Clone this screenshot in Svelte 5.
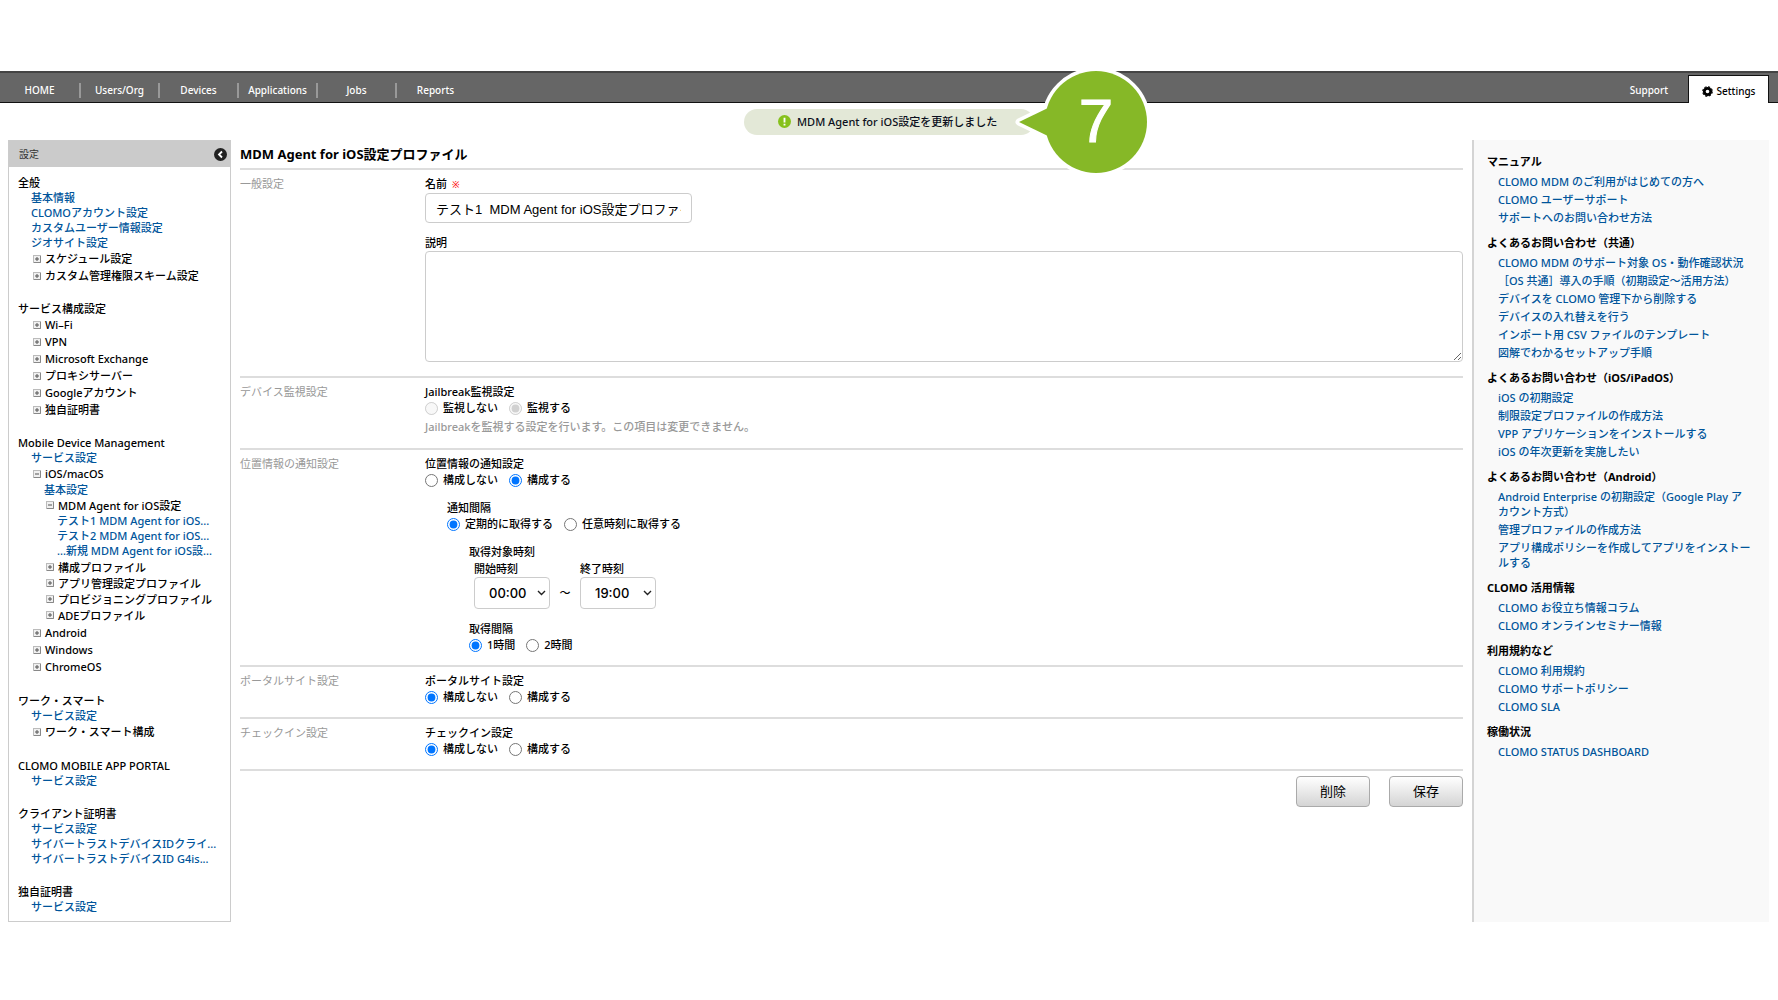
<script>
  const nav = ['HOME', 'Users/Org', 'Devices', 'Applications', 'Jobs', 'Reports'];

  const link = (text) => ({ kind: 'link', text });
  const node = (text, children) => ({ kind: 'node', text, children });

  const tree = [
    {
      title: '全般',
      items: [
        link('基本情報'),
        link('CLOMOアカウント設定'),
        link('カスタムユーザー情報設定'),
        link('ジオサイト設定'),
        node('スケジュール設定'),
        node('カスタム管理権限スキーム設定'),
      ],
    },
    {
      title: 'サービス構成設定',
      items: [
        node('Wi–Fi'),
        node('VPN'),
        node('Microsoft Exchange'),
        node('プロキシサーバー'),
        node('Googleアカウント'),
        node('独自証明書'),
      ],
    },
    {
      title: 'Mobile Device Management',
      items: [
        link('サービス設定'),
        node('iOS/macOS', [
          link('基本設定'),
          node('MDM Agent for iOS設定', [
            link('テスト1 MDM Agent for iOS...'),
            link('テスト2 MDM Agent for iOS...'),
            link('...新規 MDM Agent for iOS設...'),
          ]),
          node('構成プロファイル'),
          node('アプリ管理設定プロファイル'),
          node('プロビジョニングプロファイル'),
          node('ADEプロファイル'),
        ]),
        node('Android'),
        node('Windows'),
        node('ChromeOS'),
      ],
    },
    { title: 'ワーク・スマート', items: [link('サービス設定'), node('ワーク・スマート構成')] },
    { title: 'CLOMO MOBILE APP PORTAL', items: [link('サービス設定')] },
    {
      title: 'クライアント証明書',
      items: [
        link('サービス設定'),
        link('サイバートラストデバイスIDクライ...'),
        link('サイバートラストデバイスID G4is...'),
      ],
    },
    { title: '独自証明書', items: [link('サービス設定')] },
  ];

  const help = [
    {
      title: 'マニュアル',
      links: ['CLOMO MDM のご利用がはじめての方へ', 'CLOMO ユーザーサポート', 'サポートへのお問い合わせ方法'],
    },
    {
      title: 'よくあるお問い合わせ（共通）',
      links: [
        'CLOMO MDM のサポート対象 OS・動作確認状況',
        '［OS 共通］導入の手順（初期設定〜活用方法）',
        'デバイスを CLOMO 管理下から削除する',
        'デバイスの入れ替えを行う',
        'インポート用 CSV ファイルのテンプレート',
        '図解でわかるセットアップ手順',
      ],
    },
    {
      title: 'よくあるお問い合わせ（iOS/iPadOS）',
      links: [
        'iOS の初期設定',
        '制限設定プロファイルの作成方法',
        'VPP アプリケーションをインストールする',
        'iOS の年次更新を実施したい',
      ],
    },
    {
      title: 'よくあるお問い合わせ（Android）',
      links: [
        'Android Enterprise の初期設定（Google Play アカウント方式）',
        '管理プロファイルの作成方法',
        'アプリ構成ポリシーを作成してアプリをインストールする',
      ],
    },
    { title: 'CLOMO 活用情報', links: ['CLOMO お役立ち情報コラム', 'CLOMO オンラインセミナー情報'] },
    { title: '利用規約など', links: ['CLOMO 利用規約', 'CLOMO サポートポリシー', 'CLOMO SLA'] },
    { title: '稼働状況', links: ['CLOMO STATUS DASHBOARD'] },
  ];

  const hours = Array.from({ length: 24 }, (_, h) => `${String(h).padStart(2, '0')}:00`);

  let name = $state('テスト1  MDM Agent for iOS設定プロファイル');
  let description = $state('');
  let jailbreak = $state('on');
  let location = $state('on');
  let mode = $state('periodic');
  let start = $state('00:00');
  let end = $state('19:00');
  let interval = $state('1');
  let portal = $state('off');
  let checkin = $state('off');
</script>

{#snippet branch(items)}
  <ul class="branch">
    {#each items as item}
      <li>
        {#if item.kind === 'link'}
          <a class="leaf" href="#top">{item.text}</a>
        {:else}
          <button class="node" type="button" aria-expanded={!!item.children}>
            <svg class="toggle" viewBox="0 0 8 8" aria-hidden="true">
              <rect x="0.5" y="0.5" width="7" height="7" fill="#f0f0f0" stroke="#bbb" />
              <path d="M7.5 1v6.5H1" fill="none" stroke="#888" />
              <path d={item.children ? 'M2 4h4' : 'M2 4h4M4 2v4'} stroke="#555" fill="none" />
            </svg>
            {item.text}
          </button>
          {#if item.children}{@render branch(item.children)}{/if}
        {/if}
      </li>
    {/each}
  </ul>
{/snippet}

<header class="topbar">
  <nav class="menu">
    {#each nav as item}<a href="#top">{item}</a>{/each}
  </nav>
  <a class="support" href="#top">Support</a>
  <a class="tab" href="#top">
    <svg viewBox="0 0 12 12" aria-hidden="true">
      <circle cx="6" cy="6" r="3.5" fill="none" stroke="#000" stroke-width="3" />
      <circle cx="6" cy="6" r="5.2" fill="none" stroke="#000" stroke-width="1.2" stroke-dasharray="2.4 1.68" />
    </svg>
    Settings
  </a>
</header>

<div class="notice">
  <p class="pill" role="status">
    <svg viewBox="0 0 14 14" aria-hidden="true">
      <circle cx="7" cy="7" r="7" fill="#86c11c" />
      <path d="M7 3v5M7 9.4v1.9" stroke="#fff" stroke-width="2" />
    </svg>
    MDM Agent for iOS設定を更新しました
  </p>
  <svg class="callout" viewBox="0 0 160 110" aria-hidden="true">
    <g stroke="#fff" stroke-width="7" stroke-linejoin="round">
      <circle cx="96" cy="54" r="51" />
      <path d="M19 54L50 39V69z" />
    </g>
    <circle cx="96" cy="54" r="51" />
    <path d="M19 54L50 39V69z" />
    <text x="96" y="74" text-anchor="middle">7</text>
  </svg>
</div>

<div class="layout">
  <aside class="sidebar">
    <div class="side-head">
      <span>設定</span>
      <button type="button" aria-label="閉じる">
        <svg viewBox="0 0 13 13" aria-hidden="true">
          <circle cx="6.5" cy="6.5" r="6.5" fill="#222" />
          <path d="M8 3.5L5 6.5L8 9.5" fill="none" stroke="#fff" stroke-width="1.8" />
        </svg>
      </button>
    </div>
    <div class="tree">
      {#each tree as group}
        <section>
          <h2>{group.title}</h2>
          {@render branch(group.items)}
        </section>
      {/each}
    </div>
  </aside>

  <main>
    <h1>MDM Agent for iOS設定プロファイル</h1>

    <form onsubmit={(e) => e.preventDefault()}>
      <section class="row">
        <h2>一般設定</h2>
        <div class="fields general">
          <label for="name">名前 <span class="req">※</span></label>
          <input id="name" class="box" type="text" bind:value={name} />
          <label for="desc">説明</label>
          <textarea id="desc" class="box" bind:value={description}></textarea>
        </div>
      </section>

      <section class="row">
        <h2>デバイス監視設定</h2>
        <div class="fields">
          <h3>Jailbreak監視設定</h3>
          <div class="radios">
            <label><input type="radio" value="off" bind:group={jailbreak} disabled />監視しない</label>
            <label><input type="radio" value="on" bind:group={jailbreak} disabled />監視する</label>
          </div>
          <p class="hint">Jailbreakを監視する設定を行います。この項目は変更できません。</p>
        </div>
      </section>

      <section class="row">
        <h2>位置情報の通知設定</h2>
        <div class="fields">
          <h3>位置情報の通知設定</h3>
          <div class="radios">
            <label><input type="radio" value="off" bind:group={location} />構成しない</label>
            <label><input type="radio" value="on" bind:group={location} />構成する</label>
          </div>
          <div class="sub">
            <h3>通知間隔</h3>
            <div class="radios">
              <label><input type="radio" value="periodic" bind:group={mode} />定期的に取得する</label>
              <label><input type="radio" value="any" bind:group={mode} />任意時刻に取得する</label>
            </div>
            <div class="sub">
              <h3>取得対象時刻</h3>
              <div class="times">
                <div class="time">
                  <label for="start">開始時刻</label>
                  <select id="start" class="box" bind:value={start}>
                    {#each hours as h}<option>{h}</option>{/each}
                  </select>
                </div>
                <span class="tilde">～</span>
                <div class="time">
                  <label for="end">終了時刻</label>
                  <select id="end" class="box" bind:value={end}>
                    {#each hours as h}<option>{h}</option>{/each}
                  </select>
                </div>
              </div>
              <h3>取得間隔</h3>
              <div class="radios">
                <label><input type="radio" value="1" bind:group={interval} />1時間</label>
                <label><input type="radio" value="2" bind:group={interval} />2時間</label>
              </div>
            </div>
          </div>
        </div>
      </section>

      <section class="row">
        <h2>ポータルサイト設定</h2>
        <div class="fields">
          <h3>ポータルサイト設定</h3>
          <div class="radios">
            <label><input type="radio" value="off" bind:group={portal} />構成しない</label>
            <label><input type="radio" value="on" bind:group={portal} />構成する</label>
          </div>
        </div>
      </section>

      <section class="row">
        <h2>チェックイン設定</h2>
        <div class="fields">
          <h3>チェックイン設定</h3>
          <div class="radios">
            <label><input type="radio" value="off" bind:group={checkin} />構成しない</label>
            <label><input type="radio" value="on" bind:group={checkin} />構成する</label>
          </div>
        </div>
      </section>

      <div class="actions">
        <button type="button">削除</button>
        <button type="submit">保存</button>
      </div>
    </form>
  </main>

  <aside class="help">
    {#each help as group}
      <section>
        <h2>{group.title}</h2>
        <ul>
          {#each group.links as text}<li><a href="#top">{text}</a></li>{/each}
        </ul>
      </section>
    {/each}
  </aside>
</div>

<style>
  :global(body) {
    background: #fff;
    color: #000;
    font: 500 11px/15px 'Noto Sans', 'Noto Sans CJK JP', sans-serif;
    padding-top: 71px;
  }
  h1, h2, h3, p, ul { margin: 0; padding: 0; font-size: 11px; font-weight: 500; }
  ul { list-style: none; }
  a { color: #00559b; text-decoration: none; }
  button, input, select, textarea { font: inherit; color: inherit; box-sizing: border-box; margin: 0; }

  .topbar {
    display: flex;
    align-items: stretch;
    height: 32px;
    box-sizing: border-box;
    padding-right: 9px;
    background: #666;
    border-top: 2px solid #444;
    border-bottom: 1px solid #111;
    font-size: 10px;
  }
  .menu { display: flex; align-items: center; flex: 1; padding-top: 5px; }
  .menu a {
    width: 79px;
    box-sizing: border-box;
    text-align: center;
    color: #fff;
    border-right: 2px solid #999;
  }
  .menu a:first-child { width: 81px; }
  .menu a:last-child { border-color: transparent; }
  .support { align-self: center; padding: 5px 20px 0 0; color: #fff; }
  .tab {
    display: flex;
    align-items: center;
    justify-content: center;
    gap: 4px;
    width: 81px;
    box-sizing: border-box;
    margin: 2px 0 -1px;
    padding-top: 3px;
    background: #fff;
    border: 1px solid #111;
    border-bottom: 0;
    color: #000;
  }
  .tab svg { width: 11px; height: 11px; }

  .notice { position: relative; display: flex; justify-content: center; padding: 6px 0 5px; }
  .pill {
    display: flex;
    align-items: center;
    gap: 6px;
    width: 290px;
    height: 26px;
    box-sizing: border-box;
    padding: 0 0 1px 34px;
    border-radius: 13px;
    background: #e3e8d7;
    color: #0c1020;
  }
  .pill svg { width: 13px; height: 13px; }
  .callout {
    position: absolute;
    left: calc(50% + 111px);
    top: -35px;
    width: 160px;
    height: 110px;
    fill: #86b827;
  }
  .callout text { fill: #fff; font: 62px 'Liberation Sans', sans-serif; stroke: #fff; stroke-width: 1px; }

  .layout {
    display: grid;
    grid-template-columns: 223px minmax(0, 1fr) 297px;
    gap: 9px;
    padding: 0 9px 0 8px;
  }
  .sidebar { border: 1px solid #ccc; }
  .side-head {
    display: flex;
    align-items: center;
    justify-content: space-between;
    height: 26px;
    padding: 0 3px 0 10px;
    background: #cbcbcb;
    color: #333;
    font-size: 10px;
    font-weight: 400;
  }
  .side-head button { display: flex; padding: 0; border: 0; background: none; }
  .side-head svg { width: 13px; height: 13px; }
  .tree { display: grid; gap: 17px; padding: 8px 4px 7px 9px; }
  .tree section:nth-child(n + 4) { padding-top: 1px; }
  .branch { padding-left: 13px; }
  .branch .branch { padding: 0 0 1px 13px; }
  .leaf { display: block; white-space: nowrap; }
  .node {
    display: flex;
    align-items: center;
    gap: 4px;
    width: 100%;
    height: 17px;
    padding: 0 0 0 2px;
    border: 0;
    background: none;
    white-space: nowrap;
    text-align: left;
  }
  .branch .branch .node { height: 16px; }
  .toggle { flex: none; width: 8px; height: 8px; }

  h1 { padding: 7px 0 6px; font-size: 13px; line-height: 15px; font-weight: 700; }
  .row {
    display: grid;
    grid-template-columns: 185px minmax(0, 1fr);
    padding: 6px 0 12px;
    border-top: 2px solid #ddd;
  }
  .row h2 { color: #999; font-weight: 400; }
  .fields h3, .fields label { line-height: 16px; }
  .general { display: flex; flex-direction: column; align-items: flex-start; }
  .req { margin-left: 2px; color: #f00; font-size: 9px; }
  .box {
    border: 1px solid #ccc;
    border-radius: 4px;
    background: #fff;
    font: 500 13px/18px Inter, 'Noto Sans CJK JP', sans-serif;
  }
  #name {
    width: 267px;
    height: 30px;
    padding: 0 10px;
    margin-bottom: 12px;
    font: 13px/18px 'Liberation Sans', 'Noto Sans CJK JP', sans-serif;
  }
  #desc { width: 100%; height: 111px; margin-bottom: 2px; resize: vertical; }
  .radios { display: flex; gap: 11px; }
  .radios label { display: flex; align-items: center; gap: 5px; }
  .radios input { width: 13px; height: 13px; }
  .hint { padding: 3px 0 2px; color: #999; }
  .sub { padding: 12px 0 0 22px; }
  .times { display: flex; align-items: flex-end; padding: 1px 0 12px 5px; }
  .time { display: grid; }
  .time select {
    width: 76px;
    height: 32px;
    padding: 0 0 0 14px;
    appearance: none;
    background: #fff
      url("data:image/svg+xml,%3Csvg xmlns='http://www.w3.org/2000/svg' width='9' height='6'%3E%3Cpath d='M1 1l3.5 3.5L8 1' fill='none' stroke='%23222' stroke-width='1.4'/%3E%3C/svg%3E")
      no-repeat right 3px center;
  }
  .tilde { width: 30px; line-height: 32px; text-align: center; }
  .actions {
    display: flex;
    justify-content: flex-end;
    gap: 19px;
    padding-top: 5px;
    border-top: 2px solid #ddd;
  }
  .actions button {
    width: 74px;
    height: 31px;
    border: 1px solid #aaa;
    border-radius: 4px;
    background: linear-gradient(#fff, #d4d4d4);
    font-size: 13px;
    font-weight: 400;
  }

  .help {
    display: grid;
    align-content: start;
    gap: 10px;
    padding: 14px 17px 0 13px;
    border-left: 2px solid #d4d4d4;
    background: #f9f9f9;
    line-break: anywhere;
  }
  .help h2 { font-weight: 700; }
  .help ul { display: grid; gap: 3px; padding: 5px 0 0 11px; }
</style>
